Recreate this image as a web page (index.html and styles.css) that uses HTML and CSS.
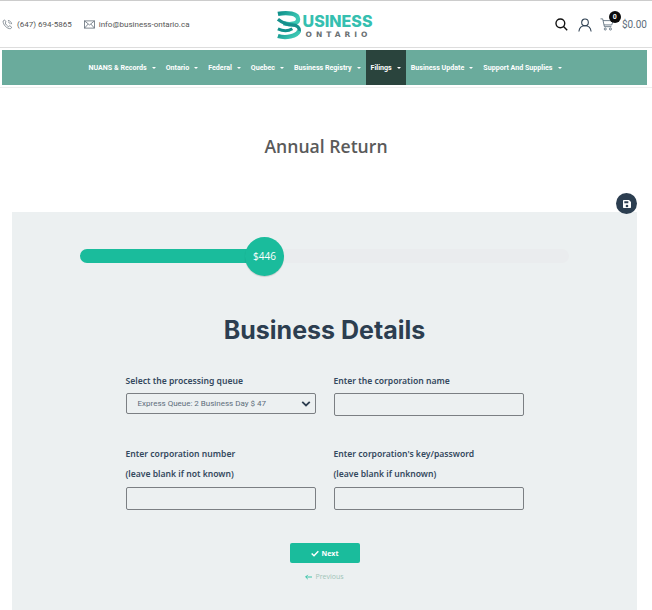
FILE: index.html
```html
<!DOCTYPE html>
<html lang="en">
<head>
    <meta charset="UTF-8">
    <meta name="viewport" content="width=device-width, initial-scale=1.0">
    <title>Annual Return</title>
    <link rel="stylesheet" href="styles.css">
</head>
<body>
    <header class="topbar">
        <div class="contact">
            <span class="contact-item">
                <svg class="contact-icon" viewBox="0 0 12 12" width="11" height="11" fill="none" stroke="#66707a" stroke-width="0.8">
                    <path d="M1.2 2.2 L2.8 1 L4.4 3.2 L3.5 4.3 C4 5.8 5.5 7.6 7.3 8.3 L8.5 7.3 L10.6 9 L9.4 10.6 C5.5 10.8 1 6.4 1.2 2.2 Z"/>
                    <path d="M6.5 1.5 C8.6 1.7 10.3 3.4 10.6 5.6 M6.5 3.2 C7.7 3.4 8.7 4.3 8.9 5.6"/>
                </svg>
                (647) 694-5865
            </span>
            <span class="contact-item">
                <svg class="contact-icon" viewBox="0 0 12 10" width="11" height="9" fill="none" stroke="#66707a" stroke-width="0.9">
                    <rect x="0.5" y="1" width="11" height="8"/>
                    <path d="M0.5 1 L6 5.5 L11.5 1 M0.5 9 L4.5 4.5 M11.5 9 L7.5 4.5"/>
                </svg>
                info@business-ontario.ca
            </span>
        </div>
        <div class="logo">
            <svg class="logo-mark" viewBox="0 0 26 30" width="25" height="30" fill="none" stroke-linecap="butt">
                <defs>
                    <linearGradient id="logoGrad" x1="0" y1="0" x2="1" y2="0.4">
                        <stop offset="0" stop-color="#0f8f8a"/>
                        <stop offset="1" stop-color="#3cc8b4"/>
                    </linearGradient>
                </defs>
                <path d="M2 3.5 C12 1.5 23 3 23 9 C23 14 14 15 8 13" stroke="url(#logoGrad)" stroke-width="4.5"/>
                <path d="M2 9 C7 13 12 15 17 15 C22 15 25 18 24 22" stroke="#16908c" stroke-width="3.5"/>
                <path d="M2 19 C6 21 12 22 17 19" stroke="#0f8f8a" stroke-width="3"/>
                <path d="M24 21 C22 27 10 29 2 26.5" stroke="url(#logoGrad)" stroke-width="4.5"/>
            </svg>
            <div class="logo-text">
                <span class="logo-top">USINESS</span>
                <span class="logo-bottom">ONTARIO</span>
            </div>
        </div>
        <div class="shop">
            <svg viewBox="0 0 16 16" width="13" height="13" fill="none" stroke="#111" stroke-width="1.7">
                <circle cx="6.6" cy="6.6" r="5.4"/>
                <path d="M10.5 10.5 L15 15"/>
            </svg>
            <svg class="shop-user" viewBox="0 0 16 16" width="14" height="14" fill="none" stroke="#2c3e50" stroke-width="1.2">
                <circle cx="8" cy="5" r="3.8"/>
                <path d="M1 15.5 C1.5 11 4.5 8.8 8 8.8 C11.5 8.8 14.5 11 15 15.5"/>
            </svg>
            <span class="cart">
                <svg viewBox="0 0 16 15" width="14" height="13" fill="none" stroke="#5d6d7b" stroke-width="1">
                    <path d="M0.5 1 L3 1 L5 10 L13 10"/>
                    <path d="M3.4 3 L15 3 L13.5 8 L4.5 8"/>
                    <circle cx="6" cy="12.7" r="1.2"/>
                    <circle cx="12" cy="12.7" r="1.2"/>
                </svg>
                <span class="cart-count">0</span>
            </span>
            <span class="cart-total">$0.00</span>
        </div>
    </header>

    <nav class="mainnav">
        <a class="nav-link">NUANS &amp; Records <i class="caret"></i></a>
        <a class="nav-link">Ontario <i class="caret"></i></a>
        <a class="nav-link">Federal <i class="caret"></i></a>
        <a class="nav-link">Quebec <i class="caret"></i></a>
        <a class="nav-link">Business Registry <i class="caret"></i></a>
        <a class="nav-link active">Filings <i class="caret"></i></a>
        <a class="nav-link">Business Update <i class="caret"></i></a>
        <a class="nav-link">Support And Supplies <i class="caret"></i></a>
    </nav>

    <h1 class="page-title">Annual Return</h1>

    <main class="panel">
        <button class="save-btn" type="button" aria-label="Save">
            <svg viewBox="0 0 12 12" width="8" height="8" fill="#fff">
                <path d="M1 0 H9 L12 3 V11 A1 1 0 0 1 11 12 H1 A1 1 0 0 1 0 11 V1 A1 1 0 0 1 1 0 Z M2 2 V5 H8 V2 Z M6 7 A2 2 0 1 0 6 11 A2 2 0 1 0 6 7 Z" fill-rule="evenodd"/>
            </svg>
        </button>

        <div class="progress">
            <div class="progress-fill" style="width: 38%"></div>
            <div class="progress-knob">$446</div>
        </div>

        <h2 class="form-title">Business Details</h2>

        <form class="form-grid">
            <div class="field">
                <label class="field-label">Select the processing queue</label>
                <div class="select-box">
                    <span>Express Queue: 2 Business Day $ 47</span>
                    <svg viewBox="0 0 12 8" width="10" height="6" fill="none" stroke="#2c3e50" stroke-width="2.4">
                        <path d="M1 1.2 L6 6 L11 1.2"/>
                    </svg>
                </div>
            </div>
            <div class="field">
                <label class="field-label">Enter the corporation name</label>
                <input class="text-input" type="text">
            </div>
            <div class="field">
                <label class="field-label two-line">Enter corporation number<br>(leave blank if not known)</label>
                <input class="text-input" type="text">
            </div>
            <div class="field">
                <label class="field-label two-line">Enter corporation's key/password<br>(leave blank if unknown)</label>
                <input class="text-input" type="text">
            </div>
        </form>

        <div class="actions">
            <button class="next-btn" type="button">
                <svg viewBox="0 0 12 10" width="8" height="7" fill="none" stroke="#fff" stroke-width="2.2">
                    <path d="M1 5 L4.5 8.3 L11 1.5"/>
                </svg>
                Next
            </button>
            <a class="prev-link">
                <svg viewBox="0 0 10 8" width="7" height="6" fill="none" stroke="#1abc9c" stroke-width="1.2">
                    <path d="M4 1 L1 4 L4 7 M1 4 H10"/>
                </svg>
                Previous
            </a>
        </div>
    </main>
</body>
</html>
```

FILE: styles.css
```css
* {
    margin: 0;
    padding: 0;
    box-sizing: border-box;
}

html, body {
    height: 610px;
    overflow: hidden;
}

body {
    font-family: Roboto, "Liberation Sans", sans-serif;
    background: #fff;
    color: #2c3e50;
}

.topbar {
    height: 48px;
    border-top: 1px solid #ccc;
    border-bottom: 1px solid #ddd;
    display: grid;
    grid-template-columns: 1fr auto 1fr;
    align-items: center;
    padding: 0 5px 0 2px;
}

.contact {
    display: flex;
    gap: 12px;
    font-size: 8px;
    color: #555;
}

.contact-item {
    display: flex;
    align-items: center;
    gap: 4px;
}

.logo {
    display: flex;
    align-items: flex-end;
    margin-left: 1px;
    margin-right: 2px;
    padding-top: 2px;
}

.logo-mark {
    margin-right: 2px;
}

.logo-text {
    display: flex;
    flex-direction: column;
}

.logo-top {
    font-family: Inter, sans-serif;
    font-size: 16px;
    font-weight: 800;
    line-height: 16px;
    color: #35bfb0;
}

.logo-bottom {
    font-family: "DejaVu Sans", sans-serif;
    font-size: 7.5px;
    font-weight: 700;
    line-height: 11px;
    letter-spacing: 4px;
    color: #6a6f72;
    margin-left: 3px;
}

.shop {
    display: flex;
    align-items: center;
    justify-content: flex-end;
    padding-top: 1px;
}

.shop-user {
    margin-left: 10px;
}

.cart {
    position: relative;
    display: flex;
    margin-left: 8px;
    margin-right: 8px;
}

.cart-count {
    position: absolute;
    top: -7px;
    left: 9px;
    width: 12px;
    height: 12px;
    border-radius: 50%;
    background: #0b0b0b;
    color: #fff;
    font-size: 7px;
    font-weight: 700;
    line-height: 12px;
    text-align: center;
}

.cart-total {
    font-size: 10px;
    color: #5d6d7b;
}

.mainnav {
    height: 35px;
    margin: 2px 5px 0 2px;
    background: #6aab9c;
    display: flex;
    justify-content: center;
    padding-left: 1px;
}

.nav-link {
    display: flex;
    align-items: center;
    padding: 0 5px;
    font-size: 7.1px;
    font-weight: 700;
    color: #fff;
    white-space: nowrap;
}

.nav-link.active {
    background: #2a443d;
}

.caret {
    width: 0;
    height: 0;
    margin-left: 5px;
    border-left: 2px solid transparent;
    border-right: 2px solid transparent;
    border-top: 2.5px solid #fff;
}

.page-title {
    margin-top: 2px;
    border-top: 1px solid #eee;
    padding-top: 46px;
    height: 125px;
    text-align: center;
    font-family: "Open Sans", sans-serif;
    font-size: 17.6px;
    font-weight: 600;
    line-height: 24px;
    color: #5a5a5a;
}

.panel {
    position: relative;
    margin: 0 15px 0 12px;
    height: 398px;
    background: #ecf0f1;
    padding: 37px 68px 0;
}

.save-btn {
    position: absolute;
    top: -19px;
    right: 0;
    width: 21px;
    height: 21px;
    border: none;
    border-radius: 50%;
    background: #2c3e50;
    display: flex;
    align-items: center;
    justify-content: center;
}

.progress {
    position: relative;
    height: 14px;
    border-radius: 7px;
    background: #eaecee;
}

.progress-fill {
    height: 100%;
    border-radius: 7px;
    background: #1abc9c;
}

.progress-knob {
    position: absolute;
    top: -12px;
    left: 165px;
    width: 39px;
    height: 39px;
    border-radius: 50%;
    background: #1abc9c;
    box-shadow: 0 1px 1px rgba(0, 0, 0, 0.15);
    color: #fff;
    font-family: "Open Sans", sans-serif;
    font-size: 10px;
    line-height: 39px;
    text-align: center;
}

.form-title {
    margin-top: 51px;
    text-align: center;
    font-family: Inter, sans-serif;
    font-size: 25px;
    font-weight: 700;
    line-height: 32px;
    color: #2c3e50;
}

.form-grid {
    display: grid;
    grid-template-columns: 190px 190px;
    grid-template-rows: 51px auto;
    column-gap: 18px;
    row-gap: 22px;
    justify-content: center;
    margin-top: 25px;
}

.field {
    display: flex;
    flex-direction: column;
    min-width: 0;
}

.field-label {
    font-family: "Noto Sans", sans-serif;
    font-size: 8.6px;
    font-weight: 600;
    line-height: 20px;
    color: #34495e;
    margin-bottom: 2px;
}

.field-label.two-line {
    margin-bottom: 3px;
}

.select-box {
    height: 21px;
    border: 1px solid #7b7f83;
    border-radius: 2px;
    display: flex;
    align-items: center;
    justify-content: space-between;
    padding: 0 4px 0 11px;
    font-size: 8px;
    color: #5d6d7b;
}

.text-input {
    height: 23px;
    width: 100%;
    border: 1px solid #7b7f83;
    border-radius: 2px;
    background: transparent;
}

.actions {
    display: flex;
    flex-direction: column;
    align-items: center;
    margin-top: 33px;
}

.next-btn {
    width: 70px;
    height: 20px;
    border: none;
    border-radius: 2px;
    background: #1abc9c;
    color: #fff;
    font-family: "Open Sans", sans-serif;
    font-size: 7px;
    font-weight: 700;
    display: flex;
    align-items: center;
    justify-content: center;
    gap: 3px;
}

.prev-link {
    display: flex;
    align-items: center;
    gap: 3px;
    margin-top: 9px;
    font-family: "Open Sans", sans-serif;
    font-size: 7px;
    color: #9fc4b8;
}
```
